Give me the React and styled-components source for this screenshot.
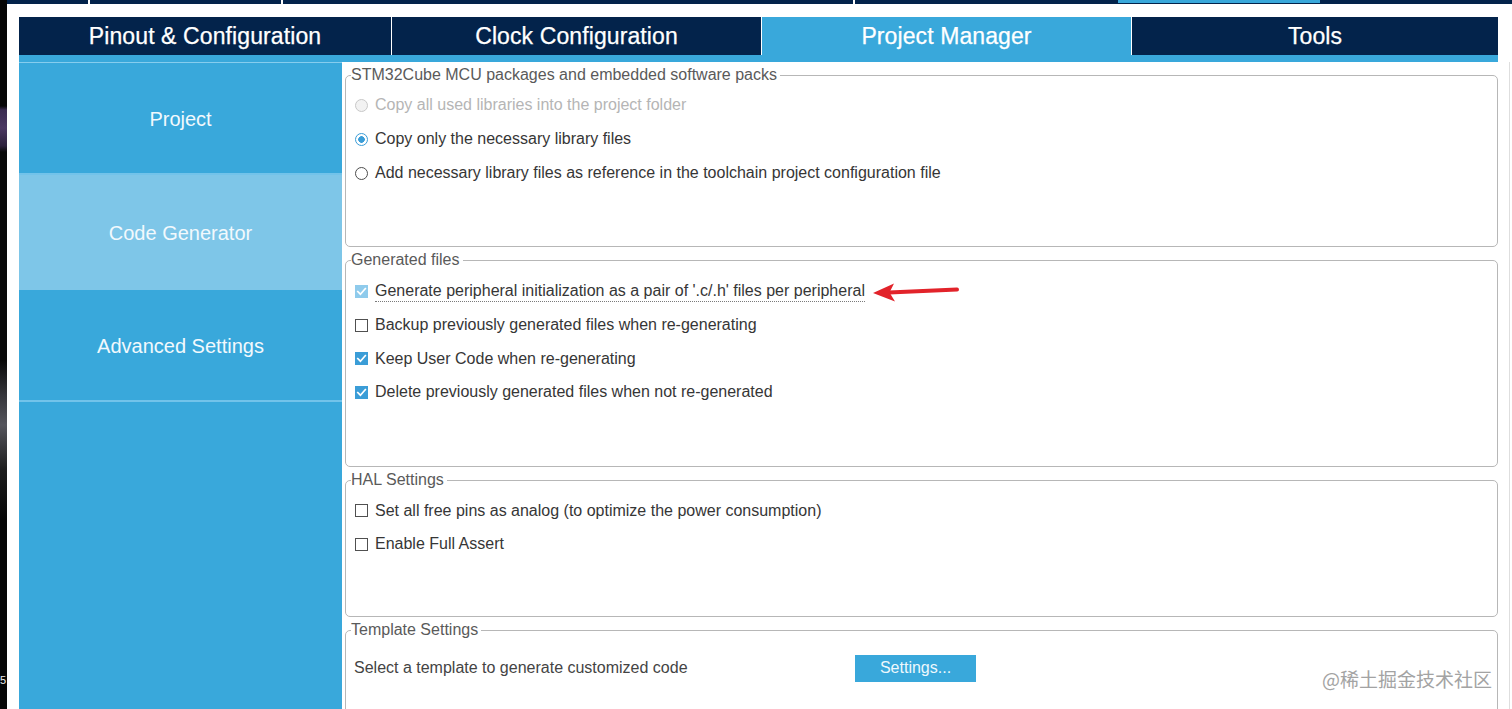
import React from "react";
import styled, { createGlobalStyle } from "styled-components";

const NAVY = "#03234b";
const BLUE = "#39a8db";
const CHECK_BLUE = "#3b9dd7";

const GlobalStyle = createGlobalStyle`
  html, body {
    margin: 0;
    padding: 0;
    background: #000;
  }
  body {
    font-family: "Liberation Sans", Arial, sans-serif;
    overflow: hidden;
  }
  *, *::before, *::after {
    box-sizing: border-box;
  }
`;

const Page = styled.div`
  position: relative;
  display: flex;
  width: 1512px;
  height: 709px;
  overflow: hidden;
`;

const DesktopEdge = styled.div`
  width: 7px;
  flex: none;
  display: flex;
  flex-direction: column;
  justify-content: flex-end;
  overflow: hidden;
  background: linear-gradient(
    to bottom,
    #060606 0px,
    #060606 106px,
    #3a2b50 110px,
    #4b3862 128px,
    #2c203b 146px,
    #080808 152px,
    #080808 360px,
    #35353a 395px,
    #55555c 425px,
    #1c1c1c 470px,
    #060606 520px,
    #060606 100%
  );
`;

const EdgeDigit = styled.span`
  color: #ececec;
  font-size: 11px;
  line-height: 14px;
  margin: 0 0 22px 0;
`;

const Window = styled.div`
  flex: 1;
  min-width: 0;
  display: flex;
  flex-direction: column;
  background: #fff;
`;

const Crumbs = styled.div`
  display: flex;
  height: 4px;
  flex: none;
  background: ${NAVY};
`;

const Crumb = styled.div`
  flex: ${(p) => (p.$w ? `0 0 ${p.$w}px` : "1")};
  height: ${(p) => (p.$active ? "3px" : "4px")};
  background: ${(p) => (p.$active ? BLUE : NAVY)};
  border-right: ${(p) => (p.$sep ? "2px solid #fff" : "0")};
`;

const Main = styled.div`
  flex: 1;
  min-height: 0;
  display: flex;
  flex-direction: column;
  padding: 13px 2px 0 12px;
`;

const TabBar = styled.div`
  display: flex;
  gap: 1px;
  height: 38px;
  flex: none;
  margin-right: 12px;
  background: #fff;
`;

const Tab = styled.div`
  flex: ${(p) => (p.$w ? `0 0 ${p.$w}px` : "1")};
  display: flex;
  align-items: center;
  justify-content: center;
  padding-top: 1px;
  background: ${(p) => (p.$active ? BLUE : NAVY)};
  color: #fff;
  font-size: 23px;
  letter-spacing: 0.1px;
  -webkit-text-stroke: 0.25px #fff;
`;

const TabRule = styled.div`
  height: 7px;
  flex: none;
  margin-right: 12px;
  background: ${BLUE};
`;

const Body = styled.div`
  flex: 1;
  min-height: 0;
  display: flex;
`;

const Sidebar = styled.nav`
  width: 323px;
  flex: none;
  display: flex;
  flex-direction: column;
  background: ${BLUE};
  border-top: 1px solid #86cdee;
`;

const SideItem = styled.div`
  height: ${(p) => p.$h}px;
  flex: none;
  display: flex;
  align-items: center;
  justify-content: center;
  padding-top: ${(p) => p.$pt || 0}px;
  font-size: 20px;
  color: #f2f9fd;
  background: ${(p) => (p.$active ? "#7ec6e8" : BLUE)};
  border-bottom: ${(p) => (p.$divider ? "2px solid #72c3ea" : "0")};
`;

const Content = styled.main`
  position: relative;
  flex: 1;
  min-width: 0;
  display: flex;
  flex-direction: column;
  gap: 4px;
  padding: 4px 11px 0 3px;
  border-right: 1px solid #dedede;
  overflow: hidden;
`;

const Option = styled.div`
  display: flex;
  align-items: center;
  gap: 7px;
  height: 33.5px;
  font-size: 16px;
  color: ${(p) => (p.$disabled ? "#b5b5b5" : "#363636")};
`;

const Group = styled.fieldset`
  flex: none;
  min-width: 0;
  height: ${(p) => p.$h}px;
  margin: 0;
  padding: ${(p) => p.$pt}px 9px 0 9px;
  border: 1px solid #b7b7b7;
  border-radius: 5px;

  ${Option} {
    height: ${(p) => p.$row || 33.5}px;
  }
`;

const Legend = styled.legend`
  margin-left: -4px;
  padding: 0 3px 0 0;
  font-size: 16px;
  line-height: 18px;
  color: #5a5a5a;
`;

const RadioMark = styled.span`
  width: 13px;
  height: 13px;
  flex: none;
  border-radius: 50%;
  border: 1px solid
    ${(p) => (p.$disabled ? "#c8c8c8" : p.$checked ? CHECK_BLUE : "#4d4d4d")};
  background: ${(p) =>
    p.$disabled
      ? "#f2f2f2"
      : p.$checked
      ? `radial-gradient(circle, ${CHECK_BLUE} 0 3px, #fff 3.6px)`
      : "#fff"};
`;

const BoxMark = styled.span`
  width: 13px;
  height: 13px;
  flex: none;
  display: inline-flex;
  align-items: center;
  justify-content: center;
  border: 1px solid ${(p) => (p.$checked ? "transparent" : "#505050")};
  background: ${(p) =>
    p.$checked ? (p.$muted ? "#8fcbec" : CHECK_BLUE) : "#fff"};
`;

const Tick = styled.svg`
  width: 11px;
  height: 11px;
  display: block;
`;

const DottedLabel = styled.span`
  line-height: 18px;
  padding-bottom: 1px;
  border-bottom: 1px dotted #7a7a7a;
`;

const Arrow = styled.svg`
  flex: none;
  width: 88px;
  height: 22px;
  margin-left: 1px;
  margin-top: 2px;
`;

const TemplateRow = styled.div`
  display: flex;
  align-items: center;
  height: 30px;
  font-size: 16px;
  color: #444;
`;

const TemplateText = styled.span`
  width: 501px;
  flex: none;
  margin-left: -1px;
`;

const SettingsButton = styled.button`
  width: 121px;
  height: 27px;
  padding: 0;
  border: 0;
  background: ${BLUE};
  color: #eef8fd;
  font-family: "Liberation Sans", Arial, sans-serif;
  font-size: 16px;
`;

const Watermark = styled.div`
  position: absolute;
  right: 20px;
  bottom: 19px;
  font-family: "Noto Sans CJK SC", "Liberation Sans", sans-serif;
  font-size: 19px;
  line-height: 22px;
  color: #a3a3a3;
  pointer-events: none;
`;

function Radio({ checked, disabled, children }) {
  return (
    <Option $disabled={disabled}>
      <RadioMark $checked={checked} $disabled={disabled} />
      <span>{children}</span>
    </Option>
  );
}

function Check({ checked, muted }) {
  return (
    <BoxMark $checked={checked} $muted={muted}>
      {checked && (
        <Tick viewBox="0 0 11 11">
          <path
            d="M1.8 5.6 L4.4 8.2 L9.3 2.6"
            fill="none"
            stroke="#fff"
            strokeWidth="1.7"
            strokeLinecap="square"
          />
        </Tick>
      )}
    </BoxMark>
  );
}

function CheckOption({ checked, muted, children }) {
  return (
    <Option>
      <Check checked={checked} muted={muted} />
      <span>{children}</span>
    </Option>
  );
}

export default function App() {
  return (
    <>
      <GlobalStyle />
      <Page>
        <DesktopEdge>
          <EdgeDigit>5</EdgeDigit>
        </DesktopEdge>
        <Window>
          <Crumbs>
            <Crumb $w={83} $sep />
            <Crumb $w={193} $sep />
            <Crumb $w={572} $sep />
            <Crumb $w={263} />
            <Crumb $w={202} $active />
            <Crumb />
          </Crumbs>
          <Main>
            <TabBar>
              <Tab $w={372}>Pinout &amp; Configuration</Tab>
              <Tab $w={369}>Clock Configuration</Tab>
              <Tab $w={369} $active>
                Project Manager
              </Tab>
              <Tab>Tools</Tab>
            </TabBar>
            <TabRule />
            <Body>
              <Sidebar>
                <SideItem $h={112} $pt={2} $divider>
                  Project
                </SideItem>
                <SideItem $h={115} $pt={2} $active>
                  Code Generator
                </SideItem>
                <SideItem $h={112} $pt={3} $divider>
                  Advanced Settings
                </SideItem>
              </Sidebar>
              <Content>
                <Group $h={181} $pt={4} $row={34}>
                  <Legend>STM32Cube MCU packages and embedded software packs</Legend>
                  <Radio disabled>Copy all used libraries into the project folder</Radio>
                  <Radio checked>Copy only the necessary library files</Radio>
                  <Radio>
                    Add necessary library files as reference in the toolchain project
                    configuration file
                  </Radio>
                </Group>
                <Group $h={216} $pt={6}>
                  <Legend>Generated files</Legend>
                  <Option>
                    <Check checked muted />
                    <DottedLabel>
                      Generate peripheral initialization as a pair of '.c/.h' files per
                      peripheral
                    </DottedLabel>
                    <Arrow viewBox="0 0 88 22">
                      <line
                        x1="16"
                        y1="10.6"
                        x2="84"
                        y2="7.6"
                        stroke="#e2232a"
                        strokeWidth="4"
                        strokeLinecap="round"
                      />
                      <path d="M0 11 L21 1.5 L16.5 10.6 L22 19.5 Z" fill="#e2232a" />
                    </Arrow>
                  </Option>
                  <CheckOption>Backup previously generated files when re-generating</CheckOption>
                  <CheckOption checked>Keep User Code when re-generating</CheckOption>
                  <CheckOption checked>
                    Delete previously generated files when not re-generated
                  </CheckOption>
                </Group>
                <Group $h={146} $pt={5}>
                  <Legend>HAL Settings</Legend>
                  <CheckOption>
                    Set all free pins as analog (to optimize the power consumption)
                  </CheckOption>
                  <CheckOption>Enable Full Assert</CheckOption>
                </Group>
                <Group $h={140} $pt={14}>
                  <Legend>Template Settings</Legend>
                  <TemplateRow>
                    <TemplateText>Select a template to generate customized code</TemplateText>
                    <SettingsButton>Settings...</SettingsButton>
                  </TemplateRow>
                </Group>
              </Content>
            </Body>
          </Main>
        </Window>
        <Watermark>@稀土掘金技术社区</Watermark>
      </Page>
    </>
  );
}
